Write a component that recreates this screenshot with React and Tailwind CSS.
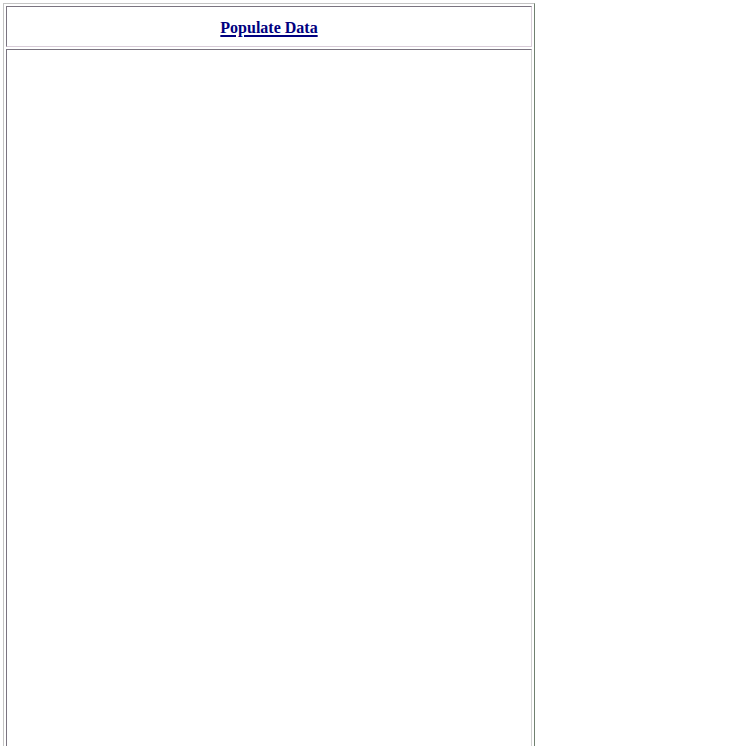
export default function App() {
  return (
    <div className="h-[746px] bg-white pl-[3px] pt-[3px] overflow-hidden">
      <div className="w-[532px] border border-t-[#c4c4c4] border-l-[#c4c4c4] border-r-[#708070] border-b-[#708070] p-[2px] flex flex-col gap-[2px]">
        <div className="h-[41px] pt-[2px] border border-t-[#7a7480] border-l-[#7a7480] border-r-[#d8ccd8] border-b-[#d8ccd8] flex items-center justify-center">
          <a
            href="#"
            className="text-[16px] font-bold text-[#000080] underline decoration-2 underline-offset-2 leading-none"
            style={{ fontFamily: '"Liberation Serif", "Times New Roman", serif' }}
          >
            Populate Data
          </a>
        </div>
        <div className="h-[760px] border border-t-[#7a7480] border-l-[#7a7480] border-r-[#d0d0d0] border-b-[#d0d0d0]"></div>
      </div>
    </div>
  )
}
